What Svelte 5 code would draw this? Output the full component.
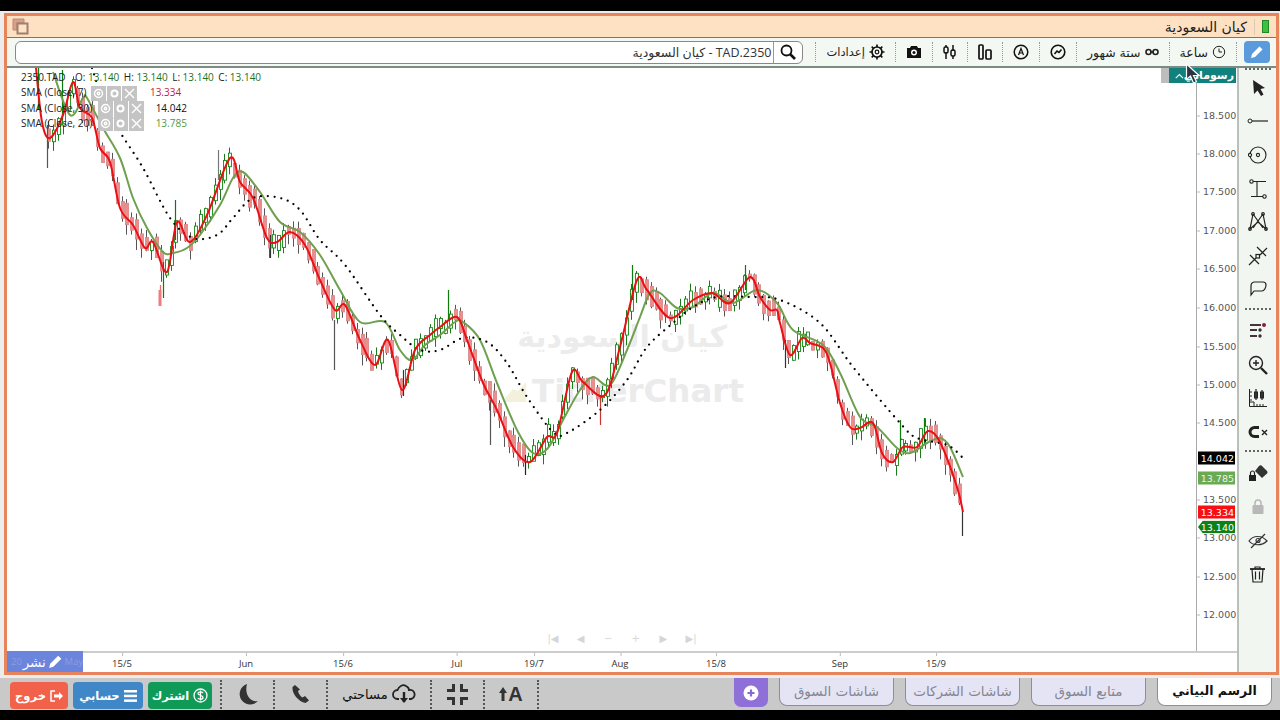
<script>
  const red = [[36,68],[42,122],[50,138],[63,115],[73,82],[80,108],[92,118],[100,148],[110,162],[120,208],[133,225],[145,248],[153,242],[167,272],[177,222],[190,242],[207,215],[230,158],[240,182],[253,198],[267,238],[277,242],[290,232],[305,245],[320,280],[335,310],[345,305],[360,340],[375,365],[388,340],[402,390],[415,350],[430,335],[440,327],[457,317],[467,340],[483,383],[497,410],[513,447],[530,462],[547,437],[557,433],[572,372],[583,382],[605,395],[620,347],[637,280],[647,290],[670,318],[693,300],[712,293],[730,303],[750,277],[760,297],[770,310],[777,310],[780,323],[790,355],[802,338],[810,343],[823,348],[830,363],[840,403],[850,427],[860,428],[873,423],[882,453],[893,462],[903,447],[917,447],[928,431],[940,442],[957,487],[963,512]];
  const green = [[53,72],[70,115],[83,98],[87,98],[103,128],[120,158],[133,198],[147,228],[163,252],[173,253],[187,248],[200,235],[220,205],[233,178],[243,172],[260,192],[280,222],[300,232],[320,255],[340,290],[360,322],[385,322],[400,350],[412,360],[425,345],[440,335],[455,322],[463,322],[480,340],[497,383],[517,430],[533,453],[548,448],[563,420],[580,390],[593,377],[610,385],[627,350],[640,317],[650,293],[660,293],[677,308],[693,307],[713,293],[733,303],[757,290],[777,303],[793,330],[823,345],[840,373],[860,417],[877,427],[897,448],[910,453],[927,443],[940,438],[950,447],[963,477]];
  const dots = [[92,68],[103,100],[120,132],[143,168],[170,218],[193,238],[217,235],[233,218],[253,198],[280,198],[300,210],[320,240],[345,265],[380,315],[400,335],[420,350],[440,350],[463,338],[487,342],[507,363],[527,397],[553,432],[567,433],[600,410],[627,380],[647,347],[673,323],[693,307],[717,297],[750,297],[780,300],[820,323],[853,367],[900,423],[917,438],[947,445],[963,458]];

  function smooth(p) {
    let d = `M${p[0][0]} ${p[0][1]}`;
    for (let i = 0; i < p.length - 1; i++) {
      const a = p[Math.max(i - 1, 0)], b = p[i], c = p[i + 1], e = p[Math.min(i + 2, p.length - 1)];
      const f = (v) => v.toFixed(1);
      d += `C${f(b[0] + (c[0] - a[0]) / 6)} ${f(b[1] + (c[1] - a[1]) / 6)} ${f(c[0] - (e[0] - b[0]) / 6)} ${f(c[1] - (e[1] - b[1]) / 6)} ${c[0]} ${c[1]}`;
    }
    return d;
  }
  function at(p, x) {
    for (let i = 0; i < p.length - 1; i++) {
      if (x >= p[i][0] && x <= p[i + 1][0]) {
        const t = (x - p[i][0]) / (p[i + 1][0] - p[i][0]);
        return p[i][1] + t * (p[i + 1][1] - p[i][1]);
      }
    }
    return p[p.length - 1][1];
  }
  let s = 12345;
  const rnd = () => ((s = (s * 1103515245 + 12345) & 0x7fffffff) / 0x7fffffff);
  const candles = [];
  for (let x = 48; x <= 962; x += 4.9) {
    const y = at(red, x);
    const slope = at(red, x + 5) - at(red, x - 5);
    const up = slope + (rnd() - 0.5) * 14 < 0;
    const h = 4 + rnd() * 10 + Math.min(Math.abs(slope), 14) * 0.6;
    const top = y - h / 2 + (rnd() - 0.5) * 8;
    candles.push({ x: Math.round(x) + 0.5, top, h, up, w1: top - rnd() * 8, w2: top + h + rnd() * 11 });
  }
  const spikes = [[47,125,168,'#555'],[160,285,306,'#f06a6a'],[163,262,298,'#0b7d0b'],[334,320,370,'#555'],[490,400,445,'#555'],[525,455,475,'#222'],[600,395,425,'#c33'],[632,265,300,'#0b7d0b'],[745,265,290,'#0b7d0b'],[962,510,536,'#333'],[924,418,445,'#0b7d0b'],[785,340,368,'#333'],[448,290,320,'#0b7d0b'],[218,150,180,'#777'],[403,370,396,'#333'],[270,235,258,'#333'],[175,200,240,'#0b7d0b'],[900,420,450,'#0b7d0b'],[38,68,110,'#0b7d0b'],[62,70,120,'#0b7d0b']];

  const prices = [['18.500',115],['18.000',153],['17.500',191],['17.000',230],['16.500',268],['16.000',307],['15.500',346],['15.000',384],['14.500',422],['13.500',499],['13.000',537],['12.500',576],['12.000',614]];
  const tags = [['14.042',458,'tag-black'],['13.785',478,'tag-green'],['13.334',512,'tag-red'],['13.140',527,'tag-last']];
  const dates = [['15/5',122],['Jun',246],['15/6',343],['Jul',457],['19/7',534],['Aug',620],['15/8',716],['Sep',840],['15/9',936]];
  const smas = [
    { name: 'SMA (Close, 7)', value: '13.334', cls: 'v-red', gap: 'g1' },
    { name: 'SMA (Close, 30)', value: '14.042', cls: 'v-black', gap: 'g2' },
    { name: 'SMA (Close, 20)', value: '13.785', cls: 'v-green', gap: 'g2' }
  ];
</script>

<div class="page">
  <div class="blackbar top"></div>
  <div class="workspace">
    <main class="frame">
      <header class="title">
        <svg class="copy" width="17" height="17" viewBox="0 0 17 17"><path d="M1 1h11v4H5v7H1z" fill="#d99f88" stroke="#b98a78"/><rect x="5.500" y="5.500" width="10" height="10" fill="#fde2c4" stroke="#a07f70" stroke-width="2"/></svg>
        <div class="title-right">
          <span class="title-text">كيان السعودية</span>
          <span class="title-sep"></span>
          <span class="status"></span>
        </div>
      </header>

      <div class="toolbar" dir="rtl">
        <button class="pencil" aria-label="رسم">
          <svg width="16" height="16" viewBox="0 0 16 16"><path d="M2 14l1-4 7.500-7.500 3 3L6 13z" fill="#fff"/></svg>
        </button>
        <span class="dsep"></span>
        <span class="tool"><svg width="14" height="14" viewBox="0 0 14 14" fill="none" stroke="#222"><circle cx="7" cy="7" r="5.700"/><path d="M7 3.500V7h3"/></svg><span>ساعة</span></span>
        <span class="dsep"></span>
        <span class="tool"><svg width="14" height="10" viewBox="0 0 14 10" fill="none" stroke="#222" stroke-width="1.600"><circle cx="3.500" cy="5" r="2.500"/><circle cx="10.500" cy="5" r="2.500"/><path d="M5 5h4"/></svg><span>ستة شهور</span></span>
        <span class="dsep"></span>
        <svg width="16" height="16" viewBox="0 0 16 16" fill="none" stroke="#111" stroke-width="1.600"><circle cx="8" cy="8" r="6.800"/><path d="M4.500 10l2.500-3 2 1.500L11.500 5.500"/></svg>
        <span class="dsep"></span>
        <svg width="16" height="16" viewBox="0 0 16 16" fill="none" stroke="#111" stroke-width="1.500"><circle cx="8" cy="8" r="6.800"/><path d="M5.500 11L8 4.500 10.500 11M6.400 9h3.200" stroke-width="1.200"/></svg>
        <span class="dsep"></span>
        <svg width="14" height="16" viewBox="0 0 14 16" fill="none" stroke="#111" stroke-width="1.700"><rect x="1" y="1" width="4" height="14" rx="1"/><rect x="8" y="6" width="5" height="9" rx="1"/></svg>
        <span class="dsep"></span>
        <svg width="14" height="16" viewBox="0 0 14 16" fill="none" stroke="#111" stroke-width="1.500"><path d="M3 15V8M3 1v2M10 15v-3M10 1v6"/><rect x="1" y="3" width="4" height="6" rx="1.500"/><rect x="8" y="6" width="4" height="6" rx="1.500"/></svg>
        <span class="dsep"></span>
        <svg width="16" height="14" viewBox="0 0 16 14"><path d="M1 3h3l1-2h6l1 2h3v10H1z" fill="#111"/><circle cx="8" cy="7.500" r="3" fill="#fff"/><circle cx="8" cy="7.500" r="1.500" fill="#111"/></svg>
        <span class="dsep"></span>
        <span class="tool settings"><svg width="16" height="16" viewBox="0 0 16 16" fill="none" stroke="#111"><circle cx="8" cy="8" r="5" stroke-width="1.700"/><circle cx="8" cy="8" r="1.800" stroke-width="1.200"/><path d="M8 0.500v2.500M8 13v2.500M0.500 8h2.500M13 8h2.500M2.700 2.700l1.800 1.800M11.500 11.500l1.800 1.800M13.300 2.700l-1.800 1.800M4.500 11.500l-1.800 1.800" stroke-width="1.700"/></svg><span>إعدادات</span></span>
        <span class="dsep"></span>
        <div class="search">
          <span class="glass"><svg width="16" height="16" viewBox="0 0 16 16" fill="none" stroke="#111" stroke-width="1.800"><circle cx="6.500" cy="6.500" r="5"/><path d="M10 10l5 5" stroke-width="2.600"/></svg></span>
          <span class="search-text" dir="ltr">كيان السعودية - TAD.2350</span>
        </div>
      </div>

      <div class="stage">
        <div class="chartcol">
          <div class="chartrow">
            <div class="plot">
              <svg class="canvas" width="1189" height="583" viewBox="7 68 1189 583">
                <text x="622" y="347" class="wm-ar" text-anchor="middle">كيان السعودية</text>
                <text x="638" y="402" class="wm-en" text-anchor="middle">TickerChart</text>
                <path d="M505 402h21v-20l-8 9-5-2-8 9z" fill="#f3f1dc"/>
                {#each candles as c}
                  <line x1={c.x} x2={c.x} y1={c.w1} y2={c.w2} stroke={c.up ? '#1c7a1c' : '#555'} />
                  <rect x={c.x - 1} y={c.top} width="3" height={c.h} fill={c.up ? '#fff' : '#ee8d8d'} stroke={c.up ? '#138a13' : '#d98a8a'} stroke-width="0.900" />
                {/each}
                {#each spikes as k}
                  <line x1={k[0] + 0.5} x2={k[0] + 0.5} y1={k[1]} y2={k[2]} stroke={k[3]} stroke-width="1.200" />
                {/each}
                <rect x="158.500" y="290" width="3" height="16" fill="#f07d7d" />
                <path d={smooth(green)} fill="none" stroke="#6ea04f" stroke-width="2" stroke-linejoin="round" />
                <path d={smooth(dots)} fill="none" stroke="#000" stroke-width="2.300" stroke-linecap="round" stroke-dasharray="0 6.800" />
                <path d={smooth(red)} fill="none" stroke="#ea0f14" stroke-width="2" stroke-linejoin="round" />
              </svg>

              <div class="legend">
                <div class="lrow ohlc">2350.TAD<span class="o">O: <b>13.140</b></span><span>H: <b>13.140</b></span><span>L: <b>13.140</b></span><span>C: <b>13.140</b></span></div>
                {#each smas as m}
                  <div class="lrow">
                    <span>{m.name}</span>
                    <span class="lbtns {m.gap}">
                      <i><svg width="11" height="11" viewBox="0 0 11 11" fill="none" stroke="#fff" stroke-width="1.400"><circle cx="5.500" cy="5.500" r="4"/><circle cx="5.500" cy="5.500" r="1.200"/></svg></i>
                      <i><svg width="11" height="11" viewBox="0 0 11 11" fill="none" stroke="#fff" stroke-width="2"><circle cx="5.500" cy="5.500" r="3"/></svg></i>
                      <i><svg width="11" height="11" viewBox="0 0 11 11" stroke="#fff" stroke-width="1.400"><path d="M1 1l9 9M10 1l-9 9"/></svg></i>
                    </span>
                    <span class="lval {m.cls}">{m.value}</span>
                  </div>
                {/each}
              </div>

              <div class="nav">
                <span>|◀</span><span>◀</span><span>−</span><span>+</span><span>▶</span><span>▶|</span>
              </div>
            </div>

            <div class="prices">
              {#each prices as p}
                <span class="price" style="top:{p[1] - 68}px">{p[0]}</span>
              {/each}
              {#each tags as t}
                <span class="tag {t[2]}" style="top:{t[1] - 68}px">{t[0]}</span>
              {/each}
            </div>

            <div class="drawings">
              <span class="dgrip"></span>
              <span class="dlabel"><svg width="12" height="8" viewBox="0 0 12 8" fill="none" stroke="#fff" stroke-width="1.500"><path d="M1 7l5-5 5 5"/></svg><b>رسوماتي</b></span>
            </div>
          </div>

          <div class="dates">
            <div class="publish">
              <span class="pub-faint">20</span>
              <b class="pub-word">نشر</b>
              <svg width="17" height="17" viewBox="0 0 16 16"><path d="M2 14l1-4 7.500-7.500 3 3L6 13z" fill="#fff"/></svg>
              <span class="pub-faint">May</span>
            </div>
            {#each dates as d}
              <span class="date" style="left:{d[1] - 7}px">{d[0]}</span>
            {/each}
          </div>
        </div>

        <aside class="side">
          <span class="sidedots first"></span>
          <span class="ic"><svg width="20" height="20" viewBox="0 0 20 20"><path d="M5 2l1 14 3.500-3.500L13 18l2.500-1.500-3-5.500L17 10z" fill="#222"/></svg></span>
          <span class="ic"><svg width="22" height="8" viewBox="0 0 22 8" fill="none" stroke="#222"><circle cx="3" cy="4" r="2"/><path d="M5 4h16" stroke-width="1.200"/></svg></span>
          <span class="ic"><svg width="20" height="20" viewBox="0 0 20 20" fill="none" stroke="#222" stroke-width="1.100"><circle cx="10" cy="10" r="8"/><circle cx="10" cy="10" r="1.600"/><circle cx="2" cy="10" r="1.600" fill="#f2f6f1"/></svg></span>
          <span class="ic"><svg width="18" height="20" viewBox="0 0 18 20" fill="none" stroke="#222" stroke-width="1.100"><circle cx="2.500" cy="2.500" r="1.700"/><path d="M4 2.500h13M8 2.500v15M2 17.500h12"/><circle cx="15.500" cy="17.500" r="1.700"/></svg></span>
          <span class="ic"><svg width="20" height="20" viewBox="0 0 20 20" fill="none" stroke="#222" stroke-width="1.200"><path d="M5 2L15 16M15 2L5 16M5 2L2 17l8-7M15 2l3 15-8-7"/><circle cx="5" cy="2" r="1.300"/><circle cx="15" cy="2" r="1.300"/><circle cx="2" cy="17" r="1.300"/><circle cx="18" cy="17" r="1.300"/></svg></span>
          <span class="ic"><svg width="20" height="20" viewBox="0 0 20 20" fill="none" stroke="#222" stroke-width="1.200"><path d="M1 19L8 12M12 9l7-7M2 9l9 9M9 1l9 9"/><rect x="8" y="8.500" width="3.500" height="3.500" fill="#f2f6f1"/></svg></span>
          <span class="ic"><svg width="18" height="16" viewBox="0 0 18 16" fill="none" stroke="#222" stroke-width="1.200"><path d="M5 1h9a3 3 0 013 3c0 3-2 6-4 6H5l-3 4V5a4 4 0 013-4z"/></svg></span>
          <span class="sidedots"></span>
          <span class="ic"><svg width="18" height="16" viewBox="0 0 18 16"><path d="M1 2h11M1 7h7M1 13h7" stroke="#43333c" stroke-width="2"/><circle cx="15" cy="2" r="2" fill="#8e1c3c"/><circle cx="11" cy="7" r="1.700" fill="#333"/><circle cx="11" cy="13" r="1.700" fill="#333"/></svg></span>
          <span class="ic"><svg width="20" height="20" viewBox="0 0 20 20" fill="none" stroke="#222" stroke-width="1.400"><circle cx="8" cy="8" r="6.500"/><path d="M8 5v6M5 8h6"/><path d="M13 13l6 6" stroke-width="2.400"/></svg></span>
          <span class="ic"><svg width="20" height="20" viewBox="0 0 20 20" fill="none" stroke="#222"><path d="M1.500 1v17.500H19M1.500 14H6v4.500M4 4h-2M4 8h-2M4 12h-2M9 18v-2M12 18v-2M15 18v-2"/><path d="M8 1v11M14 2v10" stroke-width="1.200"/><rect x="6.500" y="4" width="3" height="6" fill="#333"/><rect x="12.500" y="4" width="3" height="6" fill="#333"/></svg></span>
          <span class="ic cx"><svg width="20" height="14" viewBox="0 0 20 14" fill="none" stroke="#222"><path d="M11 2.500H6.500a4.500 4.500 0 000 9H11" stroke-width="3"/><path d="M14 5l5 5M19 5l-5 5" stroke-width="1.400"/></svg></span>
          <span class="sidedots wide"></span>
          <span class="ic"><svg width="20" height="18" viewBox="0 0 20 18"><path d="M7 7l4-5a2 2 0 012.500-.5L19 7a2 2 0 010 2.500L14 14z" fill="#333"/><rect x="1" y="11" width="7" height="6" fill="#222"/><path d="M2.500 11V9a2 2 0 014 0v2" fill="none" stroke="#222" stroke-width="1.200"/></svg></span>
          <span class="ic"><svg width="12" height="15" viewBox="0 0 12 15"><rect x="0.500" y="6" width="11" height="9" rx="1" fill="#b8b8b8"/><path d="M3 6V4a3 3 0 016 0v2" fill="none" stroke="#b8b8b8" stroke-width="1.600"/></svg></span>
          <span class="ic"><svg width="20" height="18" viewBox="0 0 20 18" fill="none" stroke="#333" stroke-width="1.200"><path d="M1 9c4-6 13-6 18 0-5 5-14 5-18 0z"/><path d="M3 16L17 2"/><circle cx="10" cy="8.500" r="2"/></svg></span>
          <span class="ic"><svg width="15" height="17" viewBox="0 0 15 17" fill="none" stroke="#222" stroke-width="1.200"><path d="M0 3h15" stroke-width="1.800"/><path d="M5 3V1h5v2M2 3l1 13h9l1-13M5.500 5.500v8M9.500 5.500v8"/></svg></span>
        </aside>
      </div>
    </main>

    <footer class="bottom">
      <div class="acts">
        <button class="act a-red"><svg width="13" height="12" viewBox="0 0 13 12" fill="none" stroke="#fff" stroke-width="1.500"><path d="M5 1H1v10h4"/><path d="M4 6h6" stroke-width="3"/><path d="M9 2l4 4-4 4z" fill="#fff" stroke="none"/></svg><span>خروج</span></button>
        <button class="act a-blue"><svg width="13" height="12" viewBox="0 0 13 12" fill="#fff"><rect width="13" height="2.500"/><rect y="4.700" width="13" height="2.500"/><rect y="9.400" width="13" height="2.500"/></svg><span>حسابي</span></button>
        <button class="act a-green"><svg width="15" height="15" viewBox="0 0 15 15" fill="none" stroke="#fff" stroke-width="1.300"><circle cx="7.500" cy="7.500" r="6.500"/><path d="M10 5c-1-1.500-5-1.500-5 .5s5 1.500 5 4-4 2-5 .5M7.500 2.500v10"/></svg><span>اشترك</span></button>
      </div>
      <span class="bsep"></span>
      <span class="bi w52"><svg width="22" height="23" viewBox="0 0 22 23"><path d="M10 1A10.500 10.500 0 1 0 21 18C14 20 7 12 10 1z" fill="#333"/></svg></span>
      <span class="bsep"></span>
      <span class="bi w52"><svg width="20" height="20" viewBox="0 0 20 20"><path d="M4 1L1.500 3c-1 6 6 15 13 16l3.500-2.500-4-4.500-2.500 1.500c-2-1-4-4-4.500-6.500L9 5.500z" fill="#333"/></svg></span>
      <span class="bsep"></span>
      <span class="bi w103"><svg width="24" height="20" viewBox="0 0 24 20" fill="none" stroke="#222" stroke-width="1.800"><path d="M7 15H5.500a4.500 4.500 0 010-9C7 2 11 0 14 2c2 1 3 2.500 3 4a4.500 4.500 0 012 9h-2"/><path d="M12 8v10" stroke-width="2.400"/><path d="M8 14l4 5 4-5z" fill="#222" stroke="none"/></svg><span class="mine">مساحتي</span></span>
      <span class="bsep"></span>
      <span class="bi w52"><svg width="23" height="23" viewBox="0 0 23 23" fill="#333"><path d="M6 1h3v8H1V6h5zM14 1h3v5h5v3h-8zM1 14h8v8H6v-5H1zM14 14h8v3h-5v5h-3z"/></svg></span>
      <span class="bsep"></span>
      <span class="bi w53"><span class="font"><svg width="8" height="14" viewBox="0 0 8 14"><path d="M4 0l4 6H5.500v8h-3V6H0z" fill="#333"/></svg>A</span></span>
      <span class="bsep"></span>

      <div class="tabs">
        <button class="plus" aria-label="إضافة"><svg width="16" height="16" viewBox="0 0 16 16"><circle cx="8" cy="8" r="7.500" fill="#fff"/><path d="M8 4.500v7M4.500 8h7" stroke="#8a68d2" stroke-width="2.200"/></svg></button>
        <span class="tab">شاشات السوق</span>
        <span class="tab">شاشات الشركات</span>
        <span class="tab">متابع السوق</span>
        <span class="tab active">الرسم البياني</span>
      </div>
    </footer>
  </div>
  <div class="blackbar"></div>

  <svg class="cursor" width="15" height="21" viewBox="0 0 15 21"><path d="M1.500 1v15.500l4-3.500L8.500 20l3-1.200-3-6.300H14z" fill="#2d3340" stroke="#fff" stroke-width="1.200"/></svg>
</div>

<style>
  :global(body) { margin: 0; font-family: "DejaVu Sans", sans-serif; }
  .page { position: relative; width: 1280px; height: 720px; overflow: hidden; display: flex; flex-direction: column; background: #000; }
  .blackbar { height: 10px; background: #000; flex: none; }
  .blackbar.top { height: 11px; }
  .workspace { flex: 1; min-height: 0; display: flex; flex-direction: column; background: #ececec; padding-top: 2px; }
  .frame { width: 1269px; height: 656px; margin-left: 4px; border: 3px solid #e8845c; display: flex; flex-direction: column; background: #fff; flex: none; }

  .title { height: 21px; flex: none; display: flex; align-items: center; justify-content: space-between; background: #fde1c2; border-bottom: 1px solid #777; padding: 0 7px 0 5px; }
  .copy { display: block; }
  .title-right { display: flex; align-items: center; gap: 7px; }
  .title-text { font-size: 14px; color: #222; }
  .title-sep { width: 1px; height: 16px; background: #ddc9b0; }
  .status { width: 5px; height: 11px; background: #3fc03f; border: 1px solid #1f8a2a; }

  .toolbar { flex: none; display: flex; align-items: center; gap: 10px; background: #f4f8f3; border-bottom: 2px solid #7d8a84; padding: 0 6px 0 8px; height: 28px; }
  .pencil { width: 26px; height: 22px; padding: 0; border: 0; border-radius: 4px; background: #5b9bdc; display: flex; align-items: center; justify-content: center; margin-left: -3px; flex: none; }
  .dsep { width: 0; height: 20px; border-right: 1px dotted #999; flex: none; }
  .tool { display: flex; align-items: center; gap: 4px; font-size: 12.500px; color: #222; white-space: nowrap; }
  .tool.settings { font-size: 11.500px; }
  .toolbar > svg { flex: none; }
  .search { flex: 1; height: 21px; margin-right: 2px; display: flex; align-items: center; background: #fff; border: 1px solid #888; border-radius: 6px; }
  .glass { width: 28px; height: 21px; border-left: 1px solid #999; display: flex; align-items: center; justify-content: center; flex: none; }
  .search-text { font: 12.500px "Open Sans", "DejaVu Sans", sans-serif; color: #333; padding-right: 2px; }

  .stage { flex: 1; min-height: 0; display: flex; }
  .chartcol { flex: 1; min-width: 0; display: flex; flex-direction: column; }
  .chartrow { position: relative; flex: none; display: flex; border-bottom: 2px solid #ccc; height: 585px; box-sizing: border-box; }
  .plot { position: relative; width: 1189px; overflow: hidden; flex: none; }
  .canvas { display: block; }
  .wm-ar { font: bold 30px "DejaVu Sans", sans-serif; fill: #ececec; }
  .wm-en { font: bold 32.500px "DejaVu Sans", sans-serif; fill: #ebebeb; }

  .legend { position: absolute; left: 14px; top: 2px; font: 10px/15.400px "Open Sans", "DejaVu Sans", sans-serif; color: #222; }
  .lrow { display: flex; align-items: center; height: 15.400px; white-space: nowrap; }
  .ohlc { gap: 4.500px; }
  .ohlc .o { margin-left: 5px; }
  .ohlc b { font-weight: 400; color: #1f6f1f; }
  .lbtns { display: inline-flex; gap: 1px; }
  .lbtns.g1 { margin-left: 5px; }
  .lbtns.g2 { margin-left: 6px; }
  .lbtns i { width: 14.500px; height: 15px; background: #c4c4c4; display: flex; align-items: center; justify-content: center; }
  .lval { margin-left: 12px; }
  .v-red { color: #c9202c; margin-left: 13px; }
  .v-black { color: #111; }
  .v-green { color: #4f9a3f; }

  .nav { position: absolute; left: 539px; top: 565px; width: 152px; display: flex; justify-content: space-between; color: #d6d6d6; font-size: 10px; }
  .nav span { width: 14px; text-align: center; white-space: nowrap; }

  .prices { position: relative; width: 41px; flex: none; border-left: 1px solid #aaa; box-sizing: border-box; background: #fff; }
  .price { position: absolute; left: 0; transform: translateY(-50%); padding-left: 6px; font-size: 9.500px; color: #555; }
  .price::before { content: ""; position: absolute; left: 0; top: 50%; width: 3px; height: 1px; background: #bbb; }
  .tag { position: absolute; left: 1px; width: 37px; height: 13px; transform: translateY(-50%); font-size: 9.500px; line-height: 13px; text-align: right; padding-right: 1px; box-sizing: border-box; color: #fff; }
  .tag-black { background: #000; }
  .tag-green { background: #6aaa50; color: #eef; }
  .tag-red { background: #f80f14; }
  .tag-last { background: #0d8214; clip-path: polygon(5px 0, 100% 0, 100% 100%, 5px 100%, 0 50%); }

  .drawings { position: absolute; right: 1px; top: 0; display: flex; height: 15px; }
  .dgrip { width: 8px; background: #bdbdbd; }
  .dlabel { width: 67px; background: #10817c; color: #fff; display: flex; align-items: center; justify-content: space-between; padding: 0 2px 0 6px; box-sizing: border-box; font-size: 11px; }

  .dates { position: relative; flex: 1; background: #fff; }
  .publish { position: absolute; left: 0; top: -2px; bottom: 0; width: 76px; background: #6b84dc; color: #fff; display: flex; align-items: center; justify-content: space-between; padding: 0 0 0 4px; box-sizing: border-box; overflow: hidden; }
  .pub-faint { font: 9.500px "Open Sans", "DejaVu Sans", sans-serif; color: #8f9cdc; }
  .pub-word { font-size: 13.500px; font-weight: 500; }
  .date { position: absolute; top: 4px; font: 9.500px "Open Sans", "DejaVu Sans", sans-serif; color: #333; transform: translateX(-50%); }
  .date::before { content: ""; position: absolute; left: 50%; top: -4px; width: 1px; height: 3px; background: #bbb; }

  .side { flex: none; border-left: 2px solid #b9bfbb; background: #f2f6f1; box-sizing: border-box; width: 39px; display: flex; flex-direction: column; align-items: center; }
  .ic { height: 33.600px; flex: none; display: flex; align-items: center; justify-content: center; }
  .sidedots { width: 26px; height: 6px; flex: none; border-top: 2px dotted #666; margin-top: 2px; box-sizing: border-box; }
  .sidedots.first { margin: 0 0 1px; height: 2px; }
  .sidedots.wide { height: 7px; margin-top: 1px; }

  .bottom { height: 32px; margin-top: 3px; flex: none; display: flex; align-items: flex-start; background: #c9c9c9; padding-left: 10px; }
  .acts { display: flex; gap: 5px; margin-top: 4px; margin-right: 8px; }
  .act { height: 27px; padding: 0; border: 0; border-radius: 4px; display: flex; align-items: center; justify-content: center; gap: 4px; color: #fff; font: bold 11.500px "DejaVu Sans", sans-serif; flex-direction: row-reverse; }
  .a-red { width: 58px; background: #f2624b; }
  .a-blue { width: 70px; background: #3f87c6; }
  .a-green { width: 64px; background: #109a57; }
  .bsep { width: 0; height: 32px; border-right: 2px dotted #555; flex: none; margin-top: 2px; }
  .bi { height: 32px; display: flex; align-items: center; justify-content: center; flex: none; gap: 4px; }
  .w52 { width: 51px; }
  .w53 { width: 52px; }
  .w103 { width: 102px; flex-direction: row-reverse; }
  .mine { font-size: 13px; font-weight: 500; color: #111; }
  .font { display: flex; align-items: center; gap: 1px; font: bold 20px "Liberation Sans", sans-serif; color: #333; }

  .tabs { margin-left: auto; margin-right: 8px; display: flex; gap: 11px; align-items: flex-start; }
  .plus { width: 34px; height: 29px; padding: 0; border: 0; border-radius: 0 0 7px 7px; background: #8f6fd8; display: flex; align-items: center; justify-content: center; }
  .tab { width: 115px; height: 28px; box-sizing: border-box; border: 1px solid #8e8e96; border-top: 0; border-radius: 0 0 8px 8px; background: #e4e4f4; color: #868690; font-size: 13.500px; display: flex; align-items: center; justify-content: center; padding-bottom: 2px; }
  .tab.active { background: #fff; color: #111; font-weight: bold; font-size: 12.500px; }

  .cursor { position: absolute; left: 1185px; top: 63px; }
</style>
